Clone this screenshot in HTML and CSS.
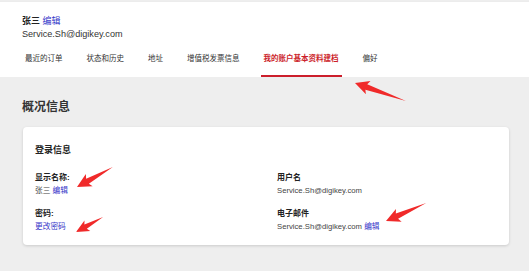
FILE: index.html
```html
<!DOCTYPE html>
<html lang="zh">

<head>
    <meta charset="UTF-8">
    <meta name="viewport" content="width=device-width, initial-scale=1.0">
    <title>我的账户</title>
    <link rel="stylesheet" href="styles.css">
</head>

<body>
    <div class="page">
        <!-- 顶部用户信息 + 标签 -->
        <div class="header">
            <div class="user_name">张三 <a href="javascript:;">编辑</a></div>
            <div class="user_mail">Service.Sh@digikey.com</div>
            <ul class="tabs">
                <li>最近的订单</li>
                <li>状态和历史</li>
                <li>地址</li>
                <li>增值税发票信息</li>
                <li class="current_tab">我的账户基本资料建档</li>
                <li>偏好</li>
            </ul>
        </div>

        <!-- 概况信息 -->
        <div class="main">
            <h2 class="main_title">概况信息</h2>
            <div class="card">
                <h3 class="card_title">登录信息</h3>
                <div class="fields">
                    <div class="field">
                        <div class="label">显示名称:</div>
                        <div class="value">张三 <a href="javascript:;">编辑</a></div>
                    </div>
                    <div class="field">
                        <div class="label">用户名</div>
                        <div class="value">Service.Sh@digikey.com</div>
                    </div>
                    <div class="field">
                        <div class="label">密码:</div>
                        <div class="value"><a href="javascript:;">更改密码</a></div>
                    </div>
                    <div class="field">
                        <div class="label">电子邮件</div>
                        <div class="value">Service.Sh@digikey.com <a href="javascript:;">编辑</a></div>
                    </div>
                </div>
            </div>
        </div>

        <!-- 标注箭头 -->
        <svg class="marks" width="529" height="271" viewBox="0 0 529 271">
            <g fill="#f02a2a">
                <polygon transform="translate(355 83) rotate(19.4)" points="0,0 14,-7 12,-2.8 54,0 12,2.8 14,7"></polygon>
                <polygon transform="translate(77 187) rotate(-29)" points="0,0 14,-7 12,-2.8 41,0 12,2.8 14,7"></polygon>
                <polygon transform="translate(76 232) rotate(-29)" points="0,0 13,-6 11,-2.5 31,0 11,2.5 13,6"></polygon>
                <polygon transform="translate(386 221) rotate(-24)" points="0,0 14,-7 12,-2.8 44,0 12,2.8 14,7"></polygon>
            </g>
        </svg>
    </div>
</body>

</html>
```

FILE: styles.css
```css
* {
    margin: 0px;
    padding: 0px;
}

ul {
    list-style: none;
}

a {
    text-decoration: none;
    color: #3434c8;
}

body {
    font-family: "Liberation Sans", "Noto Sans CJK SC", sans-serif;
    color: #333;
    background-color: #eeeeee;
}

.page {
    width: 529px;
    height: 271px;
    position: relative;
    overflow: hidden;
}


/* -------------------------顶部------------------------- */
.header {
    background-color: #fff;
    border-top: 1px solid #ececec;
    margin-top: 1px;
    padding: 13px 22px 0px;
}

.user_name {
    font-size: 9px;
    font-weight: bold;
    line-height: 12px;
    color: #222;
}

.user_name a {
    font-weight: normal;
}

.user_mail {
    font-size: 9.1px;
    line-height: 14px;
    color: #333;
}

.tabs {
    display: flex;
    gap: 18px;
}

.tabs li {
    font-size: 7.5px;
    line-height: 12px;
    padding: 12px 3px 10px;
    border-bottom: 2px solid transparent;
    color: #333;
}

.tabs .current_tab {
    color: #cc1e2b;
    font-weight: bold;
    border-bottom-color: #cc1e2b;
}


/* -------------------------概况信息------------------------- */
.main {
    padding: 22px 20px 0px 23px;
}

.main_title {
    font-size: 12px;
    line-height: 16px;
    color: #333;
    margin: 0px 0px 12px -1px;
}

.card {
    background-color: #fff;
    border-radius: 4px;
    box-shadow: 0px 1px 3px rgba(0, 0, 0, 0.15);
    padding: 17px 12px 12px;
}

.card_title {
    font-size: 9px;
    line-height: 12px;
    color: #222;
}

.fields {
    display: grid;
    grid-template-columns: 242px 1fr;
    row-gap: 10px;
    margin-top: 15px;
}

.label {
    font-size: 8px;
    font-weight: bold;
    line-height: 13px;
    color: #222;
}

.value {
    font-size: 7.7px;
    line-height: 13px;
    color: #444;
}


/* -------------------------标注------------------------- */
.marks {
    position: absolute;
    left: 0px;
    top: 0px;
    pointer-events: none;
}
```
